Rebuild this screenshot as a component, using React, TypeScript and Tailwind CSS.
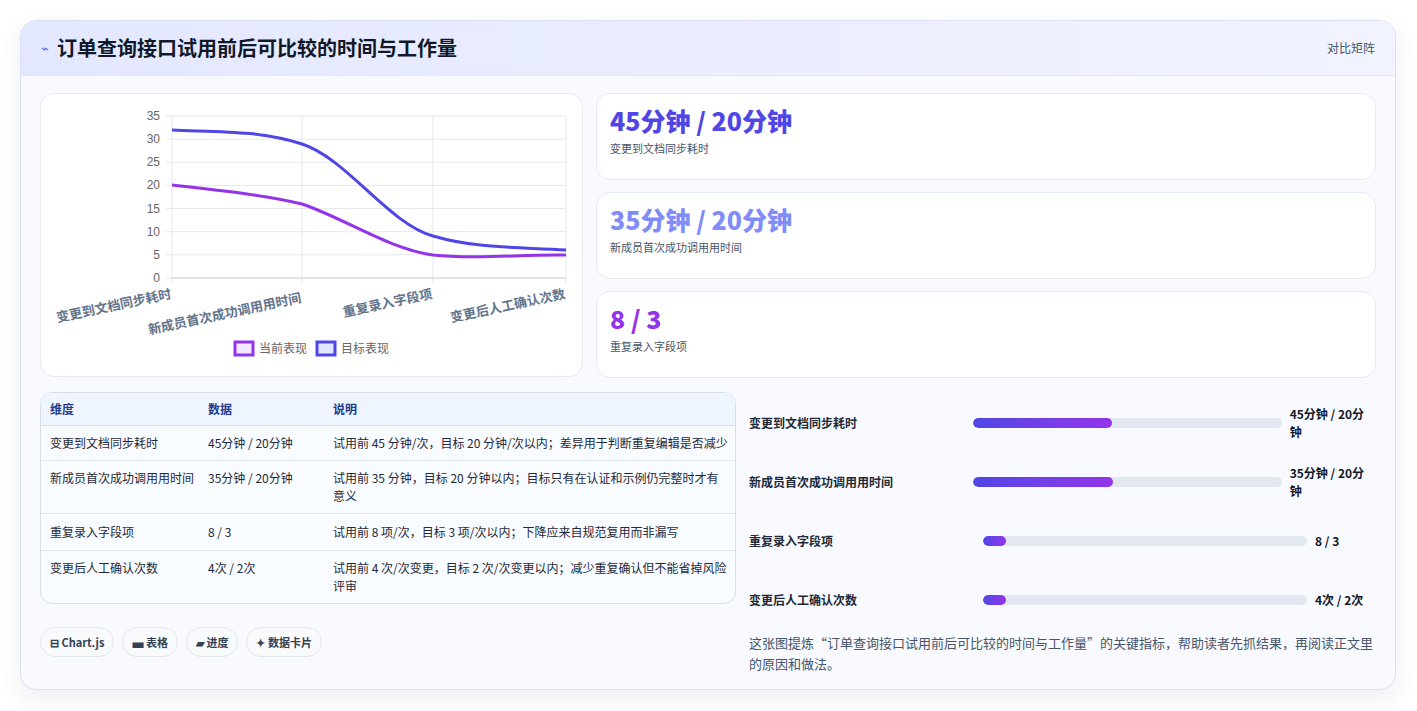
import React from "react";

const F = { fontFamily: '"Noto Sans CJK SC", "Noto Sans", sans-serif' };

function Chart() {
  const xs = [131, 261, 392, 525];
  const y = (v: number) => 184 - (162 / 35) * v;
  const labels = ["变更到文档同步耗时", "新成员首次成功调用用时间", "重复录入字段项", "变更后人工确认次数"];
  return (
    <svg width="542" height="283" viewBox="0 0 542 283" className="block">
      {[0, 5, 10, 15, 20, 25, 30, 35].map((v) => (
        <g key={v}>
          <line x1={131} x2={525} y1={y(v)} y2={y(v)} stroke="#e5e7eb" strokeWidth="1" />
          <line x1={125} x2={131} y1={y(v)} y2={y(v)} stroke="#e5e7eb" />
          <text x={119} y={y(v) + 4} textAnchor="end" fontSize="12" fill="#666" fontFamily="Liberation Sans, sans-serif">{v}</text>
        </g>
      ))}
      {xs.map((x) => (
        <line key={x} x1={x} x2={x} y1={22} y2={190} stroke="#e5e7eb" />
      ))}
      <line x1={131} x2={525} y1={184} y2={184} stroke="#d1d5db" />
      <path d="M131,36 C174,38 218,36 261,50 C305,64 348,130 392,142 C436,155 480,153 525,156" fill="none" stroke="#4f46e5" strokeWidth="3" />
      <path d="M131,91 C174,96 218,100 261,110 C305,125 348,155 392,161 C436,166 480,160 525,161" fill="none" stroke="#9333ea" strokeWidth="3" />
      {labels.map((l, i) => (
        <text key={i} x={xs[i]} y={i === 1 ? 208 : 204} textAnchor="end" fontSize="13" fontWeight="600" fill="#64748b" transform={`rotate(-12 ${xs[i]} ${i===1?208:204})`} style={F}>{l}</text>
      ))}
      <rect x={194} y={248} width={18} height={13} fill="#f3e8ff" stroke="#9333ea" strokeWidth="3" />
      <text x={218} y={259} fontSize="12" fill="#666" style={F}>当前表现</text>
      <rect x={276} y={248} width={18} height={13} fill="#e0e7ff" stroke="#4f46e5" strokeWidth="3" />
      <text x={300} y={259} fontSize="12" fill="#666" style={F}>目标表现</text>
    </svg>
  );
}

const stats = [
  { v: "45分钟 / 20分钟", l: "变更到文档同步耗时", c: "text-[#4f46e5]" },
  { v: "35分钟 / 20分钟", l: "新成员首次成功调用用时间", c: "text-[#818cf8]" },
  { v: "8 / 3", l: "重复录入字段项", c: "text-[#9333ea]" },
];

const rows = [
  ["变更到文档同步耗时", "45分钟 / 20分钟", "试用前 45 分钟/次，目标 20 分钟/次以内；差异用于判断重复编辑是否减少"],
  ["新成员首次成功调用用时间", "35分钟 / 20分钟", "试用前 35 分钟，目标 20 分钟以内；目标只有在认证和示例仍完整时才有意义"],
  ["重复录入字段项", "8 / 3", "试用前 8 项/次，目标 3 项/次以内；下降应来自规范复用而非漏写"],
  ["变更后人工确认次数", "4次 / 2次", "试用前 4 次/次变更，目标 2 次/次变更以内；减少重复确认但不能省掉风险评审"],
];

export default function App() {
  return (
    <div className="w-[1417px] h-[711px] bg-white p-[20px] pr-[21px]" style={F}>
      <div className="w-[1376px] h-[670px] rounded-[16px] border border-[#dbe1f5] bg-[#f8faff] shadow-[0_8px_24px_rgba(30,41,80,0.08)] overflow-hidden flex flex-col">
        <div className="h-[55px] flex items-center justify-between px-[20px] bg-gradient-to-r from-[#e4e8ff] to-[#f1f3ff] border-b border-[#e2e6f5]">
          <div className="flex items-center gap-[8px]">
            <span className="text-[#4f6ef0] text-[13px]">⌁</span>
            <span className="text-[20px] font-bold text-[#111827]">订单查询接口试用前后可比较的时间与工作量</span>
          </div>
          <span className="text-[12px] text-[#475569]">对比矩阵</span>
        </div>
        <div className="flex-1 px-[19px] pt-[17px] flex flex-col">
          <div className="flex gap-[13px]">
            <div className="w-[543px] h-[284px] bg-white rounded-[14px] border border-[#e5e9f5] overflow-hidden">
              <Chart />
            </div>
            <div className="flex-1 flex flex-col gap-[12px]">
              {stats.map((s) => (
                <div key={s.l} className="h-[87px] bg-white rounded-[14px] border border-[#e5e9f5] px-[13px] pt-[8px]">
                  <div className={`text-[25px] font-extrabold leading-[36px] ${s.c}`}>{s.v}</div>
                  <div className="text-[11px] text-[#475569] mt-[2px]">{s.l}</div>
                </div>
              ))}
            </div>
          </div>
          <div className="flex gap-[13px] mt-[14px]">
            <div className="w-[696px]">
              <div className="rounded-[12px] border border-[#d6deec] overflow-hidden bg-[#f8fbff] text-[12px]">
                <div className="flex h-[33px] items-center bg-[#eef5ff] border-b border-[#d6deec] text-[#1e3a8a] font-semibold">
                  <div className="w-[167px] pl-[9px]">维度</div>
                  <div className="w-[125px]">数据</div>
                  <div className="flex-1">说明</div>
                </div>
                {rows.map((r, i) => (
                  <div key={i} className={`flex py-[8px] leading-[18px] text-[#1f2937] ${i < 3 ? "border-b border-[#e2e8f0]" : ""} ${i===2?"py-[9px]":""}`}>
                    <div className="w-[167px] pl-[9px]">{r[0]}</div>
                    <div className="w-[125px]">{r[1]}</div>
                    <div className="flex-1 pr-[6px]">{r[2]}</div>
                  </div>
                ))}
              </div>
              <div className="flex gap-[8px] mt-[23px]">
                {["⊟ Chart.js", "▄ 表格", "▰ 进度", "✦ 数据卡片"].map((c) => (
                  <span key={c} className="h-[30px] px-[9px] rounded-full border border-[#e2e8f0] bg-[#f8fafc] text-[11px] font-bold text-[#334155] flex items-center">{c}</span>
                ))}
              </div>
            </div>
            <div className="flex-1 pl-[0px] flex flex-col">
              {[
                ["变更到文档同步耗时", "45分钟 / 20分钟", "w-[224px]", "w-[309px]", 45],
                ["新成员首次成功调用用时间", "35分钟 / 20分钟", "w-[224px]", "w-[309px]", 45.5],
                ["重复录入字段项", "8 / 3", "w-[234px]", "w-[324px]", 7],
                ["变更后人工确认次数", "4次 / 2次", "w-[234px]", "w-[324px]", 7],
              ].map((b, i) => (
                <div key={i} className="h-[59px] flex items-center text-[12px] pt-[2px]">
                  <div className={`${b[2]} font-semibold text-[#1f2937]`}>{b[0]}</div>
                  <div className={`${b[3]} h-[10px] rounded-full bg-[#e2e8f0] overflow-hidden`}>
                    <div className="h-full rounded-full bg-gradient-to-r from-[#4f46e5] to-[#9333ea]" style={{ width: `${b[4]}%` }} />
                  </div>
                  <div className="ml-[8px] font-bold text-[#111827] text-[12px]">{b[1]}</div>
                </div>
              ))}
              <div className="mt-[4px] text-[13px] leading-[21px] text-[#475569]">
                这张图提炼“订单查询接口试用前后可比较的时间与工作量”的关键指标，帮助读者先抓结果，再阅读正文里的原因和做法。
              </div>
            </div>
          </div>
        </div>
      </div>
    </div>
  );
}
